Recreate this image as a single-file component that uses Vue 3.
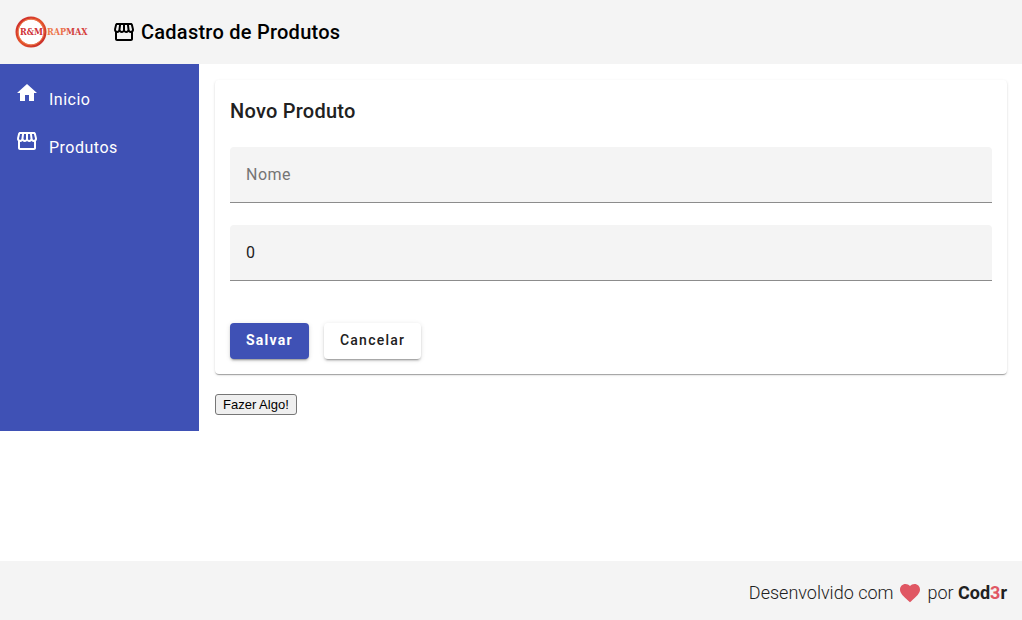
<script setup>
import { ref } from 'vue'

const name = ref('')
const price = ref('0')

const homePath = 'M10 20v-6h4v6h5v-8h3L12 3 2 12h3v8z'
const storePath =
  'M21.9 8.89l-1.05-4.37c-.22-.9-1-1.52-1.91-1.52H5.05c-.9 0-1.69.63-1.9 1.52L2.1 8.89c-.24 1.02-.02 2.06.62 2.88.08.11.19.19.28.29V19c0 1.1.9 2 2 2h14c1.1 0 2-.9 2-2v-6.94c.09-.09.2-.18.28-.28.64-.82.87-1.87.62-2.89zm-2.99-3.9l1.05 4.37c.1.42.01.84-.25 1.17-.14.18-.44.47-.94.47-.61 0-1.14-.49-1.21-1.14L16.98 5l1.93-.01zM13 5h1.96l.54 4.52c.05.39-.07.78-.33 1.07-.22.26-.54.41-.95.41-.67 0-1.22-.59-1.22-1.31V5zM8.49 9.52L9.04 5H11v4.69c0 .72-.55 1.31-1.29 1.31-.34 0-.65-.15-.89-.41-.25-.29-.37-.68-.33-1.07zm-4.45-.16L5.05 5h1.97l-.58 4.86c-.08.65-.6 1.14-1.21 1.14-.49 0-.8-.29-.93-.47-.27-.32-.36-.75-.26-1.17zM5 19v-6.03c.08.01.15.03.23.03.87 0 1.66-.36 2.24-.95.6.6 1.4.95 2.31.95.87 0 1.65-.36 2.23-.93.59.57 1.39.93 2.29.93.84 0 1.64-.35 2.24-.95.58.59 1.37.95 2.24.95.08 0 .15-.02.23-.03V19H5z'

const links = [
  { label: 'Inicio', icon: homePath },
  { label: 'Produtos', icon: storePath }
]
</script>

<template>
  <div class="app">
    <header class="toolbar">
      <a class="brand" href="#" aria-label="R&amp;M Rapmax">
        <svg class="logo" viewBox="0 0 73 34" aria-hidden="true">
          <defs>
            <linearGradient id="ring" x1="0" y1="0" x2="1" y2="1">
              <stop offset="0" stop-color="#c9252b" />
              <stop offset="0.5" stop-color="#e4532c" />
              <stop offset="1" stop-color="#c3272b" />
            </linearGradient>
            <linearGradient id="word" x1="0" y1="0" x2="1" y2="0">
              <stop offset="0" stop-color="#ee7a4a" />
              <stop offset="0.45" stop-color="#ea6a48" />
              <stop offset="0.6" stop-color="#cf3a3c" />
              <stop offset="1" stop-color="#d9423d" />
            </linearGradient>
          </defs>
          <circle cx="16" cy="17" r="14" fill="#fff" stroke="url(#ring)" stroke-width="3" />
          <circle cx="16" cy="17" r="13" fill="none" stroke="#ef7d4b" stroke-width="1" />
          <text class="mark" x="5" y="20" fill="#cf3034">R&amp;M</text>
          <text class="mark" x="32" y="20" fill="url(#word)">RAPMAX</text>
        </svg>
      </a>
      <h1 class="title">
        <svg class="icon" viewBox="0 0 24 24" aria-hidden="true"><path :d="storePath" /></svg>
        Cadastro de Produtos
      </h1>
    </header>

    <div class="body">
      <nav class="sidebar">
        <a v-for="link in links" :key="link.label" class="nav-item" href="#">
          <svg class="icon" viewBox="0 0 24 24" aria-hidden="true"><path :d="link.icon" /></svg>
          <span>{{ link.label }}</span>
        </a>
      </nav>

      <main class="content">
        <form class="card" @submit.prevent>
          <h2 class="card-title">Novo Produto</h2>
          <input v-model="name" class="field" type="text" placeholder="Nome" aria-label="Nome" />
          <input v-model="price" class="field" type="text" inputmode="decimal" aria-label="Preço" />
          <div class="actions">
            <button class="btn primary" type="submit">Salvar</button>
            <button class="btn" type="button">Cancelar</button>
          </div>
        </form>
        <button class="plain" type="button">Fazer Algo!</button>
      </main>
    </div>

    <footer class="footer">
      <span>Desenvolvido com</span>
      <svg class="heart" viewBox="0 0 24 24" aria-hidden="true">
        <path d="M12 21.35l-1.45-1.32C5.4 15.36 2 12.28 2 8.5 2 5.42 4.42 3 7.5 3c1.74 0 3.41.81 4.5 2.09C13.09 3.81 14.76 3 16.5 3 19.58 3 22 5.42 22 8.5c0 3.78-3.4 6.86-8.55 11.54L12 21.35z" />
      </svg>
      <span>por <strong>Cod<em>3</em>r</strong></span>
    </footer>
  </div>
</template>

<style>
body {
  margin: 0;
  background: #fff;
}
</style>

<style scoped>
.app {
  display: flex;
  flex-direction: column;
  min-height: 100vh;
  font-family: Roboto, "Liberation Sans", sans-serif;
  color: #212121;
}

.icon {
  flex: none;
  width: 24px;
  height: 24px;
  fill: currentColor;
}

.toolbar {
  display: flex;
  align-items: center;
  gap: 24px;
  height: 64px;
  padding: 0 15px;
  background: #f4f4f4;
  color: #000;
}

.brand,
.logo {
  display: block;
}

.logo {
  width: 73px;
  height: 34px;
}

.mark {
  font: bold 9px "DejaVu Serif Condensed", "DejaVu Serif", serif;
}

.title {
  display: flex;
  align-items: center;
  gap: 5px;
  margin: 0;
  font-size: 20px;
  font-weight: 500;
  line-height: 32px;
  letter-spacing: 0.0125em;
}

.body {
  display: flex;
  align-items: flex-start;
}

.sidebar {
  box-sizing: border-box;
  flex: none;
  align-self: stretch;
  width: 199px;
  padding: 8px 0;
  background: #3f51b5;
}

.nav-item {
  display: flex;
  align-items: center;
  gap: 10px;
  height: 48px;
  padding: 0 15px;
  color: #fff;
  font-size: 16px;
  line-height: 24px;
  letter-spacing: 0.03125em;
  text-decoration: none;
}

.nav-item .icon {
  margin-bottom: 6px;
}

.nav-item span {
  padding-top: 8px;
}

.content {
  flex: 1;
  min-width: 0;
  padding: 16px 15px 16px 16px;
}

.card {
  display: flex;
  flex-direction: column;
  padding: 15px;
  border-radius: 4px;
  background: #fff;
  box-shadow: 0 2px 1px -1px rgba(0, 0, 0, 0.2), 0 1px 1px rgba(0, 0, 0, 0.14), 0 1px 3px rgba(0, 0, 0, 0.12);
}

.card-title {
  margin: 0 0 20px;
  font-size: 20px;
  font-weight: 500;
  line-height: 32px;
  letter-spacing: 0.0125em;
}

.field {
  box-sizing: border-box;
  width: 100%;
  height: 56px;
  margin: 0 0 22px;
  padding: 0 16px;
  border: 0;
  border-bottom: 1px solid #8c8c8c;
  border-radius: 4px 4px 0 0;
  background: #f4f4f4;
  color: #212121;
  font-family: inherit;
  font-size: 16px;
  letter-spacing: 0.03125em;
  outline: none;
}

.field::placeholder {
  color: #757575;
  opacity: 1;
}

.actions {
  display: flex;
  gap: 15px;
  margin-top: 20px;
}

.btn {
  height: 36px;
  padding: 0 16px 2px;
  border: 0;
  border-radius: 4px;
  background: #fff;
  color: #212121;
  font-family: inherit;
  font-size: 14px;
  font-weight: 500;
  letter-spacing: 0.0892857em;
  box-shadow: 0 3px 1px -2px rgba(0, 0, 0, 0.2), 0 2px 2px rgba(0, 0, 0, 0.14), 0 1px 5px rgba(0, 0, 0, 0.12);
}

.btn.primary {
  background: #3f51b5;
  color: #fff;
  font-weight: 700;
}

.plain {
  display: block;
  margin-top: 20px;
  padding: 1px 7px;
  border: 1px solid #767676;
  border-radius: 3px;
  background: #efefef;
  color: #000;
  font: 13px/17px "Liberation Sans", Arial, sans-serif;
}

.footer {
  display: flex;
  align-items: center;
  justify-content: flex-end;
  gap: 5px;
  box-sizing: border-box;
  height: 59px;
  margin-top: auto;
  padding: 5px 15px 0;
  background: #f4f4f4;
  font-size: 18px;
  font-weight: 300;
  line-height: 24px;
}

.heart {
  width: 24px;
  height: 24px;
  fill: #e05763;
}

.footer strong {
  font-weight: 700;
}

.footer em {
  color: #e05763;
  font-style: normal;
}
</style>
